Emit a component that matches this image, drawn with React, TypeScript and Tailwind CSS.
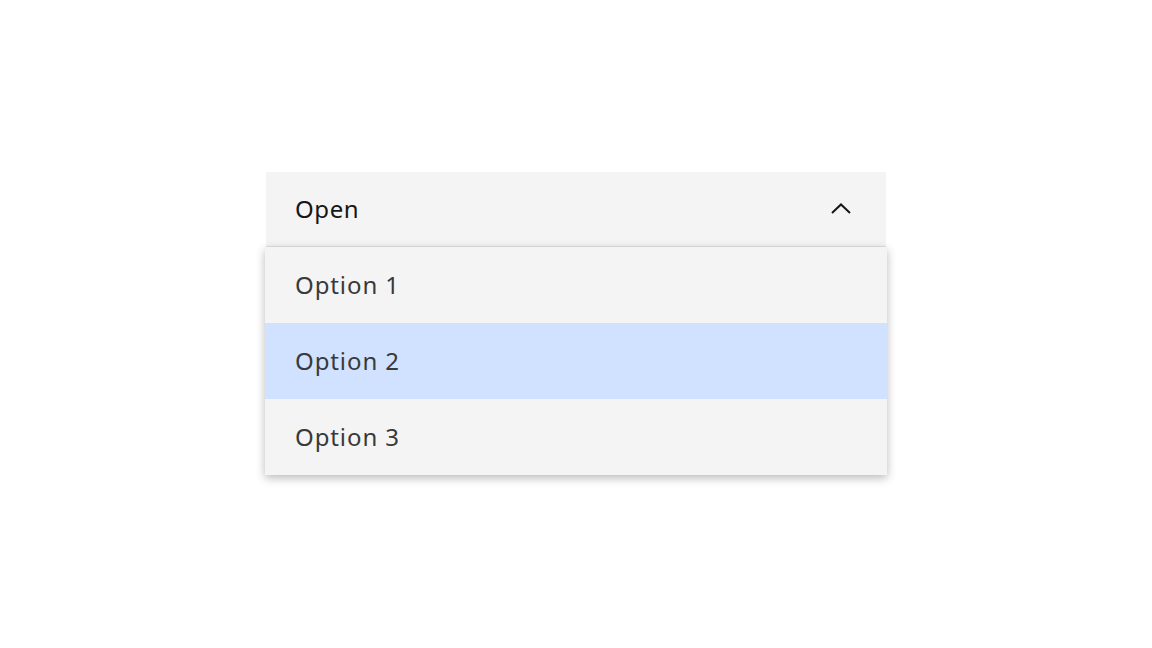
import { useState } from "react";

const options = ["Option 1", "Option 2", "Option 3"];

export default function App() {
  const [active, setActive] = useState(1);

  return (
    <div
      className="flex h-[648px] w-[1152px] items-center justify-center bg-white"
      style={{ fontFamily: '"Noto Sans", "Liberation Sans", sans-serif' }}
    >
      <div className="mb-px flex w-[620px] flex-col">
        <button
          type="button"
          className="flex h-[75px] items-center justify-between border-b border-[#e0e0e0] bg-[#f4f4f4] pl-[29px] pr-[35px] text-left text-[24px] tracking-[0.6px] text-[#161616]"
        >
          <span>Open</span>
          <svg width="20" height="11" viewBox="0 0 20 11" fill="none" className="mt-[-1px]">
            <path d="M1 10 L10 1.5 L19 10" stroke="#161616" strokeWidth="2" />
          </svg>
        </button>
        <ul className="-mx-px flex flex-col bg-[#f4f4f4] shadow-[0_3px_9px_rgba(0,0,0,0.28)]">
          {options.map((opt, i) => (
            <li
              key={opt}
              onMouseEnter={() => setActive(i)}
              className={
                "flex h-[76px] items-center pl-[30px] text-[24px] tracking-[0.9px] text-[#393939] " +
                (i === active ? "bg-[#d0e2ff]" : "bg-[#f4f4f4]")
              }
            >
              {opt}
            </li>
          ))}
        </ul>
      </div>
    </div>
  );
}
